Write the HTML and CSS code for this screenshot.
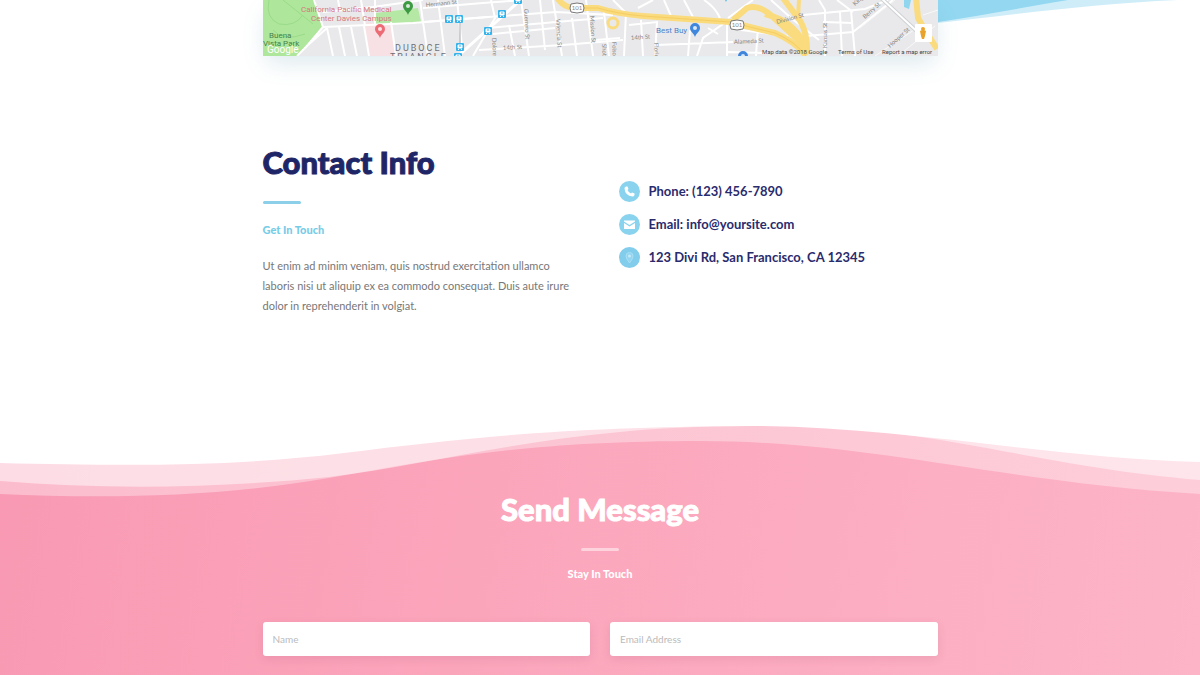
FILE: index.html
```
<!DOCTYPE html>
<html lang="en">
<head>
<meta charset="utf-8">
<meta name="viewport" content="width=device-width, initial-scale=1">
<title>Contact</title>
<link rel="stylesheet" href="styles.css">
</head>
<body>
<main>
  <section class="map-section">
    <svg class="sky-wave" viewBox="0 0 1200 24" preserveAspectRatio="none" aria-hidden="true">
      <path d="M880 0H1178C1090 4 1010 15 938 23L880 28Z" fill="#cfedf9"/>
      <path d="M880 0H1068C1020 8 980 16 938 22L880 27Z" fill="#93d8f0"/>
    </svg>
    <div class="container">
      <svg class="map" viewBox="0 0 675 56" role="img" aria-label="Street map">
        <defs>
          <g id="stop"><rect x="-4" y="-4" width="8" height="8" rx="1" fill="#35b4ec"/><path d="M-2-2h4v3h-4zM-2 2.500h1M1 2.500h1" fill="#fff" stroke="#fff" stroke-width="1"/><path d="M-1-1h2" stroke="#35b4ec"/></g>
          <g id="pin"><path d="M0 7C-1 3-5 2-5-2A5 5 0 0 1 5-2C5 2 1 3 0 7Z"/><circle cy="-2" r="2" fill="#fff" fill-opacity=".8"/></g>
          <g id="shield"><path d="M-6-4Q0-6 6-4Q8 0 6 4Q0 6-6 4Q-8 0-6-4Z" fill="#fff" stroke="#777"/><text class="label" x="0" y="2" text-anchor="middle">101</text></g>
        </defs>
        <rect width="675" height="56" fill="#e9e9eb"/>
        <path d="M100 23L129 22L132 56H106Z" fill="#f8e1e4"/>
        <path d="M112 13L155 8L158 22L112 24Z" fill="#b5e8a5"/>
        <path d="M0 0H52L59 27L44 44L34 56H0Z" fill="#aee79b"/>
        <g fill="none" stroke="#9adb89"><path d="M6 0Q2 18 16 24Q32 27 40 15M20 0Q35 12 50 24M10 30Q20 42 42 34"/></g>
        <g fill="none" stroke="#fff" stroke-width="2">
          <path d="M51 0L60 27L45 45L34 56M60 27L150 23L225 17L293 12L350 15M60 12L110 7L160 0M45 45L64 28"/>
          <path d="M64 28L70 56M76 27L82 56M88 27L94 56M101 26L106 56M75 0L77 10M98 0L102 26M128 22L133 56M112 0V24M157 0L160 22L165 56M175 0L182 56M194 0L199 46"/>
          <path d="M160 8L220 3L260 0M160 22L225 17M210 56L232 18L228 0M225 28L293 22L340 18M230 34L292 28M216 50L300 45L360 40M246 25L252 56M258 0L266 56M277 0L282 50M290 0L299 56M309 18L314 56M323 0L330 56M341 12L346 56"/>
          <path d="M350 0L363 13L361 56M378 20L380 56M366 25L394 22L392 56M333 40L357 38M393 45L470 42M375 8L390 0M401 0L408 16M421 0L430 17M441 0Q452 7 457 18M427 30L425 56M463 22L440 38L434 56M464 24V56M445 28L455 34M490 0L465 18M465 52L505 53M495 26L493 56M478 30L525 36M508 0L528 18L556 40"/>
          <path d="M540 15L602 9L625 0M543 36L590 32L630 0M556 0L562 10V56M577 12L579 56M588 10L592 56M560 22L590 23M574 0L590 12"/>
          <path d="M597 28L632 0M612 56L654 28M635 56L672 26M660 15L675 10" stroke="#f8f8f8" stroke-width="1"/>
        </g>
        <path d="M262-4L195 56" stroke="#fff" stroke-width="3"/>
        <path d="M197 19V50" stroke="#aaa"/>
        <path d="M618-2L660 37" stroke="#cfd1d4" stroke-width="4"/>
        <path d="M618-2L660 37" stroke="#fff" stroke-width="2"/>
        <path d="M641 0H648L646 9L641 7Z" fill="#91d6ef"/>
        <g fill="none" stroke="#fadb7e" stroke-width="6" stroke-linejoin="round">
          <path d="M293-4Q300 8 312 8L335 8Q355 14 380 16L467 22Q490 28 512 33Q533 42 543 56"/>
          <path d="M470 20L484 8Q497 4 511 18L543 47M502 14Q535 22 544 52M520-2L532 14Q545 28 544 54M653-3L655 18L662 30L674 49"/>
          <path d="M536-2L535 20" stroke-width="4"/>
          <circle cx="350" cy="23" r="5" stroke-width="3"/>
        </g>
        <path d="M312 8L335 8Q355 14 380 16L467 22Q490 28 512 33Q533 42 543 56" fill="none" stroke="#f6cd62"/>
        <g class="label">
          <text x="163" y="7" transform="rotate(-6 163 7)">Hermann St</text>
          <text x="240" y="50" transform="rotate(-3 240 50)">14th St</text>
          <text x="368" y="40" transform="rotate(-4 368 40)">14th St</text>
          <text x="471" y="44" transform="rotate(-3 471 44)">Alameda St</text>
          <text x="514" y="24" transform="rotate(-15 514 24)">Division St</text>
          <text x="261" y="9" transform="rotate(87 261 9)">Guerrero St</text>
          <text x="293" y="19" transform="rotate(87 293 19)">Valencia St</text>
          <text x="327" y="16" transform="rotate(87 327 16)">Mission St</text>
          <text x="229" y="38" transform="rotate(87 229 38)">Dolores</text>
          <text x="339" y="44" transform="rotate(87 339 44)">Shotwell</text>
          <text x="349" y="42" transform="rotate(87 349 42)">Folsom</text>
          <text x="391" y="43" transform="rotate(87 391 43)">Florida</text>
          <text x="564" y="48" transform="rotate(-90 564 48)">Kansas St</text>
          <text x="602" y="19" transform="rotate(-42 602 19)">Berry St</text>
          <text x="592" y="6" transform="rotate(-42 592 6)">King St</text>
          <text x="627" y="48" transform="rotate(-42 627 48)">Hooper St</text>
        </g>
        <g class="place">
          <text class="hospital" x="38" y="12">California Pacific Medical</text>
          <text class="hospital" x="48" y="21">Center Davies Campus</text>
          <text class="park" x="6" y="38">Buena</text>
          <text class="park" x="0" y="46">Vista Park</text>
          <text class="logo" x="4" y="53">Google</text>
          <text class="shop" x="393" y="33">Best Buy</text>
          <text class="district" x="132" y="51">DUBOCE</text>
          <text class="district" x="127" y="60">TRIANGLE</text>
        </g>
        <use href="#pin" x="145" y="8" fill="#3c9a43"/>
        <use href="#pin" x="117" y="31" fill="#ec6b75"/>
        <use href="#pin" x="432" y="30" fill="#3f86dd"/>
        <use href="#pin" x="480" y="58" fill="#3f86dd"/>
        <use href="#pin" x="463" y="-5" fill="#35b4ec"/>
        <use href="#stop" x="186" y="19"/><use href="#stop" x="196" y="19"/>
        <use href="#stop" x="225" y="31"/><use href="#stop" x="239" y="14"/>
        <use href="#stop" x="255" y="0"/><use href="#stop" x="197" y="47"/><use href="#stop" x="195" y="57"/>
        <use href="#shield" x="314" y="8"/><use href="#shield" x="474" y="25"/>
        <rect x="652" y="24" width="17" height="18" rx="1" fill="#fff"/>
        <path d="M657 31q3-2 6 0l-1 5-1 3h-2l-1-3z" fill="#e9a32b"/><circle cx="660" cy="29" r="2" fill="#e9a32b"/>
        <g class="credit">
          <text x="499" y="54">Map data ©2018 Google</text>
          <text x="575" y="54">Terms of Use</text>
          <text x="619" y="54">Report a map error</text>
        </g>
      </svg>
    </div>
  </section>

  <section class="container info">
    <div class="intro">
      <h2 class="title">Contact Info</h2>
      <span class="rule"></span>
      <h3 class="subtitle">Get In Touch</h3>
      <p class="copy">Ut enim ad minim veniam, quis nostrud exercitation ullamco laboris nisi ut aliquip ex ea commodo consequat. Duis aute irure dolor in reprehenderit in volgiat.</p>
    </div>
    <ul class="details">
      <li>
        <svg class="icon" viewBox="0 0 21 21" aria-hidden="true"><circle cx="10.500" cy="10.500" r="10.500" fill="#8ad3ee"/><path d="M7 5.500L8.500 5.500L9.500 8L8.500 9Q9.500 11.500 12 12.500L13 11.500L15.500 12.500V14Q15 15.500 13.500 15.500Q6 14.500 5.500 7.500Q5.500 6 7 5.500Z" fill="#fff"/></svg>
        <span>Phone: (123) 456-7890</span>
      </li>
      <li>
        <svg class="icon" viewBox="0 0 21 21" aria-hidden="true"><circle cx="10.500" cy="10.500" r="10.500" fill="#8ad3ee"/><path d="M5 6.500H16V7.500L10.500 11L5 7.500ZM5 9L10.500 12.500L16 9V15H5Z" fill="#fff"/></svg>
        <span>Email: info@yoursite.com</span>
      </li>
      <li>
        <svg class="icon" viewBox="0 0 21 21" aria-hidden="true"><circle cx="10.500" cy="10.500" r="10.500" fill="#83cdec"/><path d="M10.500 16Q7 11.500 7 9A3.500 3.500 0 0 1 14 9Q14 11.500 10.500 16Z" fill="#93d5f0" stroke="#a9dff4"/><circle cx="10.500" cy="9" r="1.500" fill="#c5eaf8"/></svg>
        <span>123 Divi Rd, San Francisco, CA 12345</span>
      </li>
    </ul>
  </section>

  <section class="message">
    <svg class="pink-wave" viewBox="0 0 1200 80" preserveAspectRatio="none" aria-hidden="true">
      <path fill="#fff" fill-opacity=".35" d="M0 0V74C110 79 220 77 329 58C440 38 530 21 700 21C870 21 1000 62 1200 74V0Z"/>
      <path fill="#fff" fill-opacity=".48" d="M0 0V61C110 70 220 68 329 57C450 42 560 6 749 6C930 2 1020 45 1200 60V0Z"/>
      <path fill="#fff" d="M0-1V43C130 46 230 47 344 33C470 17 570 7 749 6C900 6 1050 38 1200 42V-1Z"/>
    </svg>
    <div class="container">
      <h2 class="title">Send Message</h2>
      <span class="rule"></span>
      <h3 class="subtitle">Stay In Touch</h3>
      <form class="fields">
        <input type="text" name="name" placeholder="Name" aria-label="Name">
        <input type="email" name="email" placeholder="Email Address" aria-label="Email Address">
      </form>
    </div>
  </section>
</main>
</body>
</html>
```
FILE: styles.css
```
* { box-sizing: border-box; }

body {
  margin: 0;
  background: #fff;
  color: #777;
  font-family: Lato, "Open Sans", sans-serif;
  font-size: 11px;
  line-height: 20px;
}

main {
  display: flex;
  flex-direction: column;
  min-height: 100vh;
}

h2, h3, p, ul { margin: 0; padding: 0; }

.container {
  width: 80%;
  max-width: 675px;
  margin: 0 auto;
}

.map-section { position: relative; }

.sky-wave {
  position: absolute;
  top: 0;
  left: 0;
  width: 100%;
  height: 24px;
}

.map {
  position: relative;
  display: block;
  width: 100%;
  box-shadow: 0 10px 24px -4px rgba(70, 140, 165, 0.2);
}

.label { fill: #858585; font-size: 6px; }
.place { font-family: Roboto, sans-serif; font-size: 8px; }
.hospital { fill: #d77880; }
.park { fill: #48824a; }
.shop { fill: #4c83cc; }
.logo { fill: #fff; font-size: 10px; }
.district { fill: #6d7178; font-size: 9px; letter-spacing: 2px; }
.credit { fill: #444; font-family: Roboto, sans-serif; font-size: 6px; }

.title {
  color: #1f2667;
  font-size: 31px;
  font-weight: 900;
  line-height: 38px;
  -webkit-text-stroke: 1px currentColor;
}

.rule {
  display: block;
  width: 38px;
  height: 3px;
  margin: 20px 0 16px;
  border-radius: 2px;
  background: #8bcfe8;
}

.subtitle {
  color: #77cce8;
  font-size: 11px;
  font-weight: 900;
  line-height: 20px;
}

.info {
  display: grid;
  grid-template-columns: 1fr 1fr;
  gap: 37px;
  padding: 87px 0 104px;
}

.copy { margin-top: 16px; }

.details {
  display: flex;
  flex-direction: column;
  gap: 12px;
  padding-top: 38px;
  list-style: none;
  color: #2a2b6d;
  font-size: 13px;
  font-weight: 700;
}

.details li {
  display: flex;
  align-items: flex-start;
  gap: 9px;
}

.icon { flex: none; width: 21px; height: 21px; }

.message {
  flex: 1;
  padding-bottom: 20px;
  background: linear-gradient(100deg, #f999b3 0%, #fba5bb 40%, #fdb4c7 100%);
  text-align: center;
}

.pink-wave {
  display: block;
  width: 100%;
  height: 80px;
  margin-bottom: -10px;
}

.message .title { color: #fff; }
.message .rule { margin: 20px auto 13px; background: #fdd3de; }
.message .subtitle { color: #fff; }

.fields {
  display: grid;
  grid-template-columns: 1fr 1fr;
  gap: 20px;
  margin-top: 38px;
}

.fields input {
  width: 100%;
  height: 34px;
  padding: 0 10px;
  border: 0;
  border-radius: 3px;
  background: #fff;
  box-shadow: 0 3px 10px rgba(130, 60, 90, 0.12);
  color: #777;
  font: 10px Lato, "Open Sans", sans-serif;
}

.fields input::placeholder { color: #bbb; }
```
